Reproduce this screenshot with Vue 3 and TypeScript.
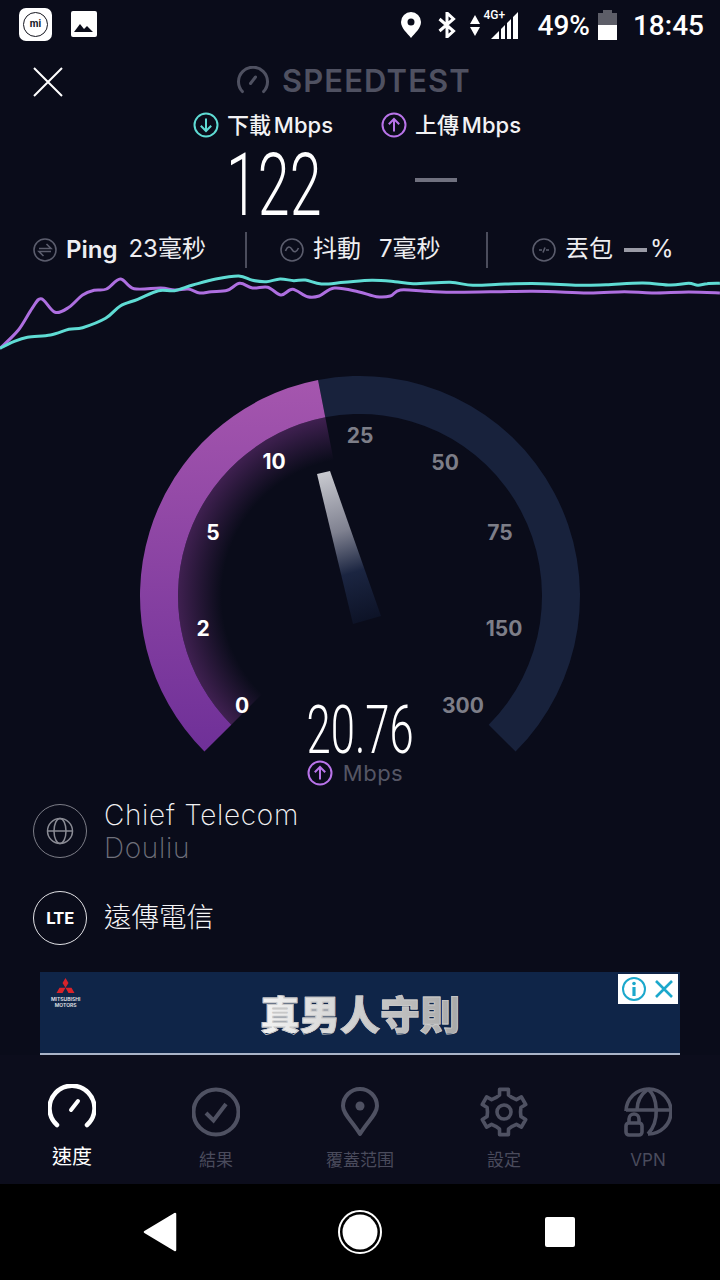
<script setup lang="ts">
type Pt = [number, number];

// chart points read from the reference (x scaled 2.178, y scaled 3, crop starts at y=100)
const teal: Pt[] = [[0,745],[30,725],[60,712],[110,705],[150,688],[180,683],[230,655],[262,618],[300,598],[345,572],[380,572],[420,555],[470,537],[520,528],[550,541],[580,545],[610,537],[640,542],[665,540],[700,552],[750,547],[810,541],[860,545],[900,551],[980,547],[1030,556],[1100,552],[1180,551],[1260,556],[1320,554],[1400,549],[1460,555],[1500,550],[1520,556],[1540,551],[1568,550]];
const violet: Pt[] = [[0,745],[40,690],[70,625],[90,596],[120,637],[150,622],[180,585],[205,571],[232,567],[262,537],[292,566],[350,564],[380,570],[410,567],[435,579],[460,575],[495,571],[522,550],[550,564],[583,562],[612,585],[637,568],[670,590],[695,588],[728,564],[780,575],[820,590],[850,588],[872,570],[930,574],[1000,577],[1160,574],[1280,579],[1360,575],[1420,579],[1500,576],[1568,579]];

// catmull-rom through the points so the lines stay soft
const toCurve = (pts: Pt[]) => {
  const p = pts.map(([x, y]): Pt => [x / 2.178, y / 3 + 100 - 270]);
  let d = `M${p[0][0].toFixed(1)} ${p[0][1].toFixed(1)}`;
  for (let i = 0; i < p.length - 1; i++) {
    const a = p[Math.max(i - 1, 0)];
    const b = p[i];
    const c = p[i + 1];
    const e = p[Math.min(i + 2, p.length - 1)];
    const c1x = b[0] + (c[0] - a[0]) / 6;
    const c1y = b[1] + (c[1] - a[1]) / 6;
    const c2x = c[0] - (e[0] - b[0]) / 6;
    const c2y = c[1] - (e[1] - b[1]) / 6;
    d += `C${c1x.toFixed(1)} ${c1y.toFixed(1)} ${c2x.toFixed(1)} ${c2y.toFixed(1)} ${c[0].toFixed(1)} ${c[1].toFixed(1)}`;
  }
  return d;
};

const cx = 360;
const cy = 596;

const polar = (r: number, deg: number): Pt => {
  const a = (deg * Math.PI) / 180;
  return [cx + r * Math.sin(a), cy - r * Math.cos(a)];
};

const sector = (r1: number, r2: number, from: number, to: number) => {
  const big = to - from > 180 ? 1 : 0;
  const [ax, ay] = polar(r2, from);
  const [bx, by] = polar(r2, to);
  const [cx2, cy2] = polar(r1, to);
  const [dx, dy] = polar(r1, from);
  return `M${ax} ${ay}A${r2} ${r2} 0 ${big} 1 ${bx} ${by}L${cx2} ${cy2}A${r1} ${r1} 0 ${big} 0 ${dx} ${dy}Z`;
};

const split = -11;
const trackPath = sector(182, 220, split, 135);
const fillPath = sector(182, 220, -135, split);
const glowPath = sector(130, 182, -135, split);

const ticks = [
  { t: "0", x: 242, y: 705, on: true },
  { t: "2", x: 203, y: 628, on: true },
  { t: "5", x: 213, y: 532, on: true },
  { t: "10", x: 274, y: 461, on: true },
  { t: "25", x: 360, y: 435, on: false },
  { t: "50", x: 445, y: 462, on: false },
  { t: "75", x: 500, y: 532, on: false },
  { t: "150", x: 504, y: 628, on: false },
  { t: "300", x: 463, y: 705, on: false },
];

// six tooth cog, same outline as the settings tab
const gear = (() => {
  const c = 24;
  const out: string[] = [];
  for (let i = 0; i < 6; i++) {
    const base = i * 60;
    const steps: [number, number][] = [
      [16.5, base - 30],
      [17.5, base - 15],
      [23, base - 11],
      [23, base + 11],
      [17.5, base + 15],
    ];
    for (const [r, d] of steps) {
      const a = (d * Math.PI) / 180;
      const x = c + r * Math.sin(a);
      const y = c - r * Math.cos(a);
      out.push(`${out.length ? "L" : "M"}${x.toFixed(1)} ${y.toFixed(1)}`);
    }
  }
  return out.join("") + "Z";
})();
</script>

<template>
  <div class="screen">
    <div class="status">
      <div class="status-left">
        <div class="mi-box">
          <span class="mi-ring"><span class="mi-text">mi</span></span>
        </div>
        <svg class="pic" width="26" height="26" viewBox="0 0 26 26">
          <rect width="26" height="26" rx="2" fill="#fff" />
          <path d="M3 21l6-8 4 5 3-3 6 6z" fill="#0a0c1a" />
        </svg>
      </div>
      <div class="status-right">
        <svg width="20" height="26" viewBox="0 0 20 26">
          <path fill-rule="evenodd" d="M10 0a10 10 0 0 1 10 10c0 6-6 11-10 16C6 21 0 16 0 10A10 10 0 0 1 10 0zm0 6.500a3.500 3.500 0 1 0 0 7 3.500 3.500 0 0 0 0-7z" fill="#fff" />
        </svg>
        <svg class="bt" width="18" height="26" viewBox="0 0 18 26">
          <path d="M1.500 7l14 12-6.500 6V1l6.500 6-14 12" fill="none" stroke="#fff" stroke-width="3" />
        </svg>
        <div class="net">
          <svg class="arrows" width="10" height="21" viewBox="0 0 10 21">
            <path d="M5 0l5 9H0zM5 21l5-9H0z" fill="#fff" />
          </svg>
          <span class="net-label">4G+</span>
          <svg class="bars" width="28" height="28" viewBox="0 0 28 28">
            <path d="M0 28L8 20V28ZM10 18l4-4V28H10ZM16 12l4-4V28H16ZM22 6l5-5V28H22Z" fill="#fff" />
          </svg>
        </div>
        <span class="pct">49%</span>
        <div class="battery"><div class="battery-cap"></div><div class="battery-top"></div><div class="battery-low"></div></div>
        <span class="clock">18:45</span>
      </div>
    </div>

    <div class="header">
      <svg class="close" width="32" height="32" viewBox="0 0 32 32">
        <path d="M2 2l28 28M30 2L2 30" stroke="#fff" stroke-width="2" fill="none" />
      </svg>
      <svg width="32" height="28" viewBox="0 0 32 28">
        <path d="M5.400 25.600a14.500 14.500 0 1 1 21.200 0" fill="none" stroke="#4f5161" stroke-width="3" stroke-linecap="round" />
        <path d="M13.500 17.500l5-6.500" fill="none" stroke="#4f5161" stroke-width="3" stroke-linecap="round" />
      </svg>
      <span class="brand">SPEEDTEST</span>
    </div>

    <div class="legend">
      <div class="legend-item">
        <svg width="26" height="26" viewBox="0 0 26 26">
          <circle cx="13" cy="13" r="11.500" fill="none" stroke="#5fdcd4" stroke-width="2" />
          <path d="M13 6.500v12.500M7.800 13.800l5.200 5.200 5.200-5.200" fill="none" stroke="#5fdcd4" stroke-width="2" />
        </svg>
        <span>下載 Mbps</span>
      </div>
      <div class="legend-item">
        <svg width="26" height="26" viewBox="0 0 26 26">
          <circle cx="13" cy="13" r="11.500" fill="none" stroke="#b974ea" stroke-width="2" />
          <path d="M13 19.500V7M7.800 12.200L13 7l5.200 5.200" fill="none" stroke="#b974ea" stroke-width="2" />
        </svg>
        <span>上傳 Mbps</span>
      </div>
    </div>

    <div class="values">
      <span class="big">122</span>
      <span class="dash"></span>
    </div>

    <div class="stats">
      <div class="stat stat-ping">
        <svg width="24" height="24" viewBox="0 0 24 24">
          <circle cx="12" cy="12" r="11" fill="none" stroke="#5b5d6d" stroke-width="1.600" />
          <path d="M6 10.500h12l-4.500-4.500M18 13.500H6l4.500 4.500" fill="none" stroke="#5b5d6d" stroke-width="1.600" />
        </svg>
        <b class="ping">Ping</b>
        <span>23毫秒</span>
      </div>
      <i class="rule"></i>
      <div class="stat stat-jitter">
        <svg width="24" height="24" viewBox="0 0 24 24">
          <circle cx="12" cy="12" r="11" fill="none" stroke="#5b5d6d" stroke-width="1.600" />
          <path d="M5.500 13c2-5 4.500-5 6.500-1.500s4.500 3 6.500-1.500" fill="none" stroke="#5b5d6d" stroke-width="1.600" />
        </svg>
        <span class="cjk">抖動</span>
        <span>7毫秒</span>
      </div>
      <i class="rule"></i>
      <div class="stat stat-loss">
        <svg width="24" height="24" viewBox="0 0 24 24">
          <circle cx="12" cy="12" r="11" fill="none" stroke="#5b5d6d" stroke-width="1.600" />
          <path d="M7 12h3M14 12h3M11 14.500l2-5" fill="none" stroke="#5b5d6d" stroke-width="1.600" />
        </svg>
        <span class="cjk">丟包</span>
        <i class="loss-dash"></i>
        <span>%</span>
      </div>
    </div>

    <svg class="chart" width="720" height="82" viewBox="0 0 720 82">
      <path :d="toCurve(violet)" fill="none" stroke="#ae6fe0" stroke-width="3" stroke-linejoin="round" />
      <path :d="toCurve(teal)" fill="none" stroke="#5fdcd4" stroke-width="3" stroke-linejoin="round" />
    </svg>

    <div class="gauge">
      <svg width="720" height="420" viewBox="0 370 720 420">
        <defs>
          <linearGradient id="arcFill" x1="0" y1="380" x2="0" y2="750" gradientUnits="userSpaceOnUse">
            <stop offset="0" stop-color="#a556ae" />
            <stop offset="1" stop-color="#6f3098" />
          </linearGradient>
          <radialGradient id="arcGlow" :cx="cx" :cy="cy" r="182" gradientUnits="userSpaceOnUse">
            <stop offset="0.76" stop-color="#0a0c1a" />
            <stop offset="1" stop-color="#3f2050" />
          </radialGradient>
          <linearGradient id="needle" x1="323" y1="472" x2="367" y2="620" gradientUnits="userSpaceOnUse">
            <stop offset="0" stop-color="#c9cad0" />
            <stop offset="0.4" stop-color="#7f8190" />
            <stop offset="0.68" stop-color="#1b2541" />
            <stop offset="1" stop-color="#0d1327" />
          </linearGradient>
        </defs>
        <path :d="glowPath" fill="url(#arcGlow)" />
        <path :d="trackPath" fill="#18223c" />
        <path :d="fillPath" fill="url(#arcFill)" />
        <polygon points="317,474 330,471 381,616 353,624" fill="url(#needle)" />
        <text v-for="tick in ticks" :key="tick.t" :x="tick.x" :y="tick.y + 7.500" class="tick" :class="{ on: tick.on }" text-anchor="middle">{{ tick.t }}</text>
      </svg>
      <div class="reading">
        <span class="reading-num">20.76</span>
        <div class="reading-unit">
          <svg width="26" height="26" viewBox="0 0 26 26">
            <circle cx="13" cy="13" r="11.500" fill="none" stroke="#b974ea" stroke-width="2" />
            <path d="M13 19.500V7M7.800 12.200L13 7l5.200 5.200" fill="none" stroke="#b974ea" stroke-width="2" />
          </svg>
          <span>Mbps</span>
        </div>
      </div>
    </div>

    <div class="info">
      <div class="info-row">
        <div class="badge">
          <svg width="28" height="28" viewBox="0 0 28 28">
            <circle cx="14" cy="14" r="12.500" fill="none" stroke="#8a8b94" stroke-width="1.500" />
            <ellipse cx="14" cy="14" rx="6" ry="12.500" fill="none" stroke="#8a8b94" stroke-width="1.500" />
            <path d="M1.500 14h25" stroke="#8a8b94" stroke-width="1.500" />
          </svg>
        </div>
        <div class="info-text">
          <div class="info-name">Chief Telecom</div>
          <div class="info-sub">Douliu</div>
        </div>
      </div>
      <div class="info-row second">
        <div class="badge badge-on"><span>LTE</span></div>
        <div class="carrier">遠傳電信</div>
      </div>
    </div>

    <div class="ad">
      <div class="ad-logo">
        <svg width="19" height="18" viewBox="0 0 24 24">
          <path d="M12 0l4 6.500-4 6.500-4-6.500zM12 13h8l4 7h-8zM12 13H4l-4 7h8z" fill="#d8232a" />
        </svg>
        <span>MITSUBISHI<br />MOTORS</span>
      </div>
      <div class="ad-title">真男人守則</div>
      <div class="ad-close">
        <svg width="26" height="26" viewBox="0 0 26 26">
          <circle cx="13" cy="13" r="11" fill="none" stroke="#1ba8cc" stroke-width="2" />
          <circle cx="13" cy="7.500" r="1.800" fill="#1ba8cc" />
          <path d="M13 11v9" stroke="#1ba8cc" stroke-width="3.200" />
        </svg>
        <svg width="22" height="22" viewBox="0 0 22 22">
          <path d="M3 3l16 16M19 3L3 19" stroke="#1ba8cc" stroke-width="2.600" />
        </svg>
      </div>
    </div>

    <div class="tabs">
      <div class="tab active">
        <svg width="48" height="50" viewBox="0 0 48 50">
          <path d="M9 41a22.500 22.500 0 1 1 30 0" fill="none" stroke="#fff" stroke-width="4.500" stroke-linecap="round" />
          <path d="M23 26l7-9" fill="none" stroke="#fff" stroke-width="4" stroke-linecap="round" />
        </svg>
        <span>速度</span>
      </div>
      <div class="tab">
        <svg width="48" height="50" viewBox="0 0 48 50">
          <circle cx="24" cy="25" r="22.500" fill="none" stroke="#4f5162" stroke-width="4" />
          <path d="M14 26l7.500 7.500L34 17" fill="none" stroke="#4f5162" stroke-width="4" />
        </svg>
        <span>結果</span>
      </div>
      <div class="tab">
        <svg width="48" height="50" viewBox="0 0 48 50">
          <path d="M24 47C16 34 7 27 7 19a17 17 0 0 1 34 0c0 8-9 15-17 28z" fill="none" stroke="#4f5162" stroke-width="4" stroke-linejoin="round" />
          <circle cx="24" cy="19" r="4.500" fill="#4f5162" />
        </svg>
        <span>覆蓋范围</span>
      </div>
      <div class="tab">
        <svg width="48" height="50" viewBox="0 -1 48 50">
          <path :d="gear" fill="none" stroke="#4f5162" stroke-width="3.600" stroke-linejoin="round" />
          <circle cx="24" cy="24" r="7" fill="none" stroke="#4f5162" stroke-width="3.600" />
        </svg>
        <span>設定</span>
      </div>
      <div class="tab">
        <svg width="48" height="50" viewBox="0 0 48 50">
          <path d="M2 24A22.500 22.500 0 1 1 24 47" fill="none" stroke="#4f5162" stroke-width="3.600" />
          <path d="M2 23h44M24 2c10 8 12 32 0 45M24 2c-8 6-11 13-11 21" fill="none" stroke="#4f5162" stroke-width="3.600" />
          <rect x="2" y="36" width="16" height="12" rx="3" fill="#0c0d1c" stroke="#4f5162" stroke-width="3.600" />
          <path d="M5 36v-4a5 5 0 0 1 10 0v4" fill="none" stroke="#4f5162" stroke-width="3.600" />
        </svg>
        <span class="latin">VPN</span>
      </div>
    </div>

    <div class="navbar">
      <svg width="34" height="40" viewBox="0 0 34 40">
        <path d="M32 2v36L2 20z" fill="#fff" stroke="#fff" stroke-width="2.500" stroke-linejoin="round" />
      </svg>
      <svg width="44" height="44" viewBox="0 0 44 44">
        <circle cx="22" cy="22" r="21" fill="none" stroke="#fff" stroke-width="2" />
        <circle cx="22" cy="22" r="17.500" fill="#fff" />
      </svg>
      <div class="nav-square"></div>
    </div>
  </div>
</template>

<style>
html,
body {
  margin: 0;
  background: #0a0c1a;
}
</style>

<style scoped>
.screen {
  width: 720px;
  height: 1280px;
  overflow: hidden;
  display: flex;
  flex-direction: column;
  background: #0a0c1a;
  color: #fff;
  font-family: Inter, "Noto Sans CJK TC", sans-serif;
}

.status {
  height: 50px;
  flex: none;
  display: flex;
  justify-content: space-between;
  align-items: center;
  padding: 0 16px 0 19px;
  font-family: Roboto, sans-serif;
}
.status-left {
  display: flex;
  align-items: center;
  gap: 19px;
  margin-top: -2px;
}
.mi-box {
  width: 33px;
  height: 33px;
  border-radius: 7px;
  background: #fff;
  display: flex;
  align-items: center;
  justify-content: center;
}
.mi-ring {
  width: 23px;
  height: 23px;
  border-radius: 50%;
  border: 1.500px solid #15161f;
  display: flex;
  align-items: center;
  justify-content: center;
}
.mi-text {
  color: #15161f;
  font-size: 10px;
  font-weight: 700;
  line-height: 1;
}
.status-right {
  display: flex;
  align-items: center;
}
.bt {
  margin-left: 17px;
}
.net {
  width: 49px;
  height: 30px;
  margin-left: 14px;
  display: flex;
  position: relative;
}
.arrows {
  margin-top: 5px;
}
.net-label {
  position: absolute;
  left: 14px;
  top: -1px;
  font-size: 12px;
  font-weight: 500;
  line-height: 12px;
}
.bars {
  position: absolute;
  left: 21px;
  top: 1px;
}
.pct {
  margin-left: 19px;
  font-size: 28px;
  font-weight: 500;
}
.battery {
  width: 19px;
  margin-left: 8px;
  display: flex;
  flex-direction: column;
  align-items: center;
}
.battery-cap {
  width: 9px;
  height: 3px;
  background: #5d5e68;
}
.battery-top {
  width: 19px;
  height: 12px;
  background: #5d5e68;
}
.battery-low {
  width: 19px;
  height: 15px;
  background: #fff;
}
.clock {
  margin-left: 16px;
  font-size: 28px;
  font-weight: 500;
}

.header {
  height: 60px;
  flex: none;
  display: flex;
  align-items: center;
  padding-left: 237px;
  position: relative;
}
.close {
  position: absolute;
  left: 32px;
  top: 16px;
}
.brand {
  margin-left: 13px;
  font-size: 31px;
  font-weight: 600;
  letter-spacing: 1.1px;
  color: #4f5161;
  line-height: 1;
}

.legend {
  height: 30px;
  flex: none;
  display: flex;
  padding-left: 193px;
  gap: 48px;
}
.legend-item {
  display: flex;
  align-items: center;
  gap: 8px;
  font-size: 22px;
  font-weight: 500;
  word-spacing: -3px;
  line-height: 1;
  color: #f2f2f4;
}
.legend-item span {
  margin-bottom: 1px;
}

.values {
  height: 90px;
  flex: none;
  display: flex;
  align-items: center;
  padding-left: 226px;
}
.big {
  display: inline-block;
  width: 93px;
  font-family: Roboto, sans-serif;
  font-weight: 300;
  font-size: 87px;
  line-height: 90px;
  transform: scaleX(0.66);
  transform-origin: left center;
}
.dash {
  width: 42px;
  height: 4px;
  margin: 0 0 10px 96px;
  background: #70717f;
}

.stats {
  height: 40px;
  flex: none;
  display: flex;
  align-items: center;
  font-size: 24px;
  color: #eeeef1;
}
.stat {
  display: flex;
  align-items: center;
  line-height: 1;
}
.stat span {
  margin-bottom: 2px;
}
.stat svg {
  margin-right: 9px;
}
.stat-ping {
  width: 245px;
  padding-left: 33px;
  box-sizing: border-box;
}
.ping {
  font-weight: 600;
  margin-right: 11px;
}
.stat-jitter {
  width: 239px;
  padding-left: 33px;
  box-sizing: border-box;
}
.stat-jitter .cjk {
  margin-right: 18px;
}
.stat-loss {
  padding-left: 44px;
}
.stat-loss .cjk {
  margin-right: 11px;
}
.rule {
  width: 2px;
  height: 36px;
  flex: none;
  background: #4b4d5c;
}
.loss-dash {
  width: 23px;
  height: 4px;
  margin-right: 3px;
  background: #9a9ba6;
}

.chart {
  flex: none;
  display: block;
}

.gauge {
  height: 420px;
  margin-top: 18px;
  flex: none;
  position: relative;
}
.gauge svg {
  display: block;
}
.tick {
  font-family: Inter, sans-serif;
  font-size: 21px;
  font-weight: 700;
  fill: #7d7e88;
}
.tick.on {
  fill: #fff;
}
.reading {
  position: absolute;
  left: 0;
  right: 0;
  top: 332px;
  display: flex;
  flex-direction: column;
  align-items: center;
}
.reading-num {
  font-family: Roboto, sans-serif;
  font-weight: 300;
  font-size: 66px;
  line-height: 58px;
  transform: scaleX(0.66);
}
.reading-unit {
  display: flex;
  align-items: center;
  gap: 10px;
  margin-right: 10px;
  font-size: 22px;
  line-height: 26px;
  letter-spacing: 0.5px;
  color: #555665;
}

.info {
  height: 182px;
  flex: none;
  padding-left: 33px;
  display: flex;
  flex-direction: column;
}
.info-row {
  display: flex;
  align-items: center;
  gap: 17px;
  height: 54px;
  margin-top: 14px;
}
.info-row.second {
  margin-top: 33px;
}
.badge {
  width: 54px;
  height: 54px;
  box-sizing: border-box;
  flex: none;
  border: 1.500px solid #7c7d87;
  border-radius: 50%;
  display: flex;
  align-items: center;
  justify-content: center;
}
.badge-on {
  border-color: #e2e2e6;
  font-family: Roboto, sans-serif;
  font-size: 17px;
  font-weight: 700;
}
.info-text {
  padding-top: 2px;
}
.info-name {
  font-size: 28px;
  font-weight: 200;
  letter-spacing: 0.7px;
  line-height: 33px;
  color: #f2f2f4;
}
.info-sub {
  font-size: 28px;
  font-weight: 200;
  letter-spacing: 0.7px;
  line-height: 33px;
  color: #6f707b;
}
.carrier {
  font-size: 27.500px;
  font-weight: 300;
  line-height: 1;
  color: #f4f4f6;
}

.ad {
  width: 640px;
  height: 83px;
  box-sizing: border-box;
  margin: 0 40px;
  flex: none;
  position: relative;
  background: #0f2548;
  border-bottom: 2px solid #aab4c8;
  display: flex;
  align-items: center;
  justify-content: center;
}
.ad-logo {
  position: absolute;
  left: 11px;
  top: 6px;
  display: flex;
  flex-direction: column;
  align-items: center;
  gap: 1px;
}
.ad-logo span {
  font-size: 5px;
  line-height: 5.500px;
  text-align: center;
  font-weight: 600;
  color: #e6e6ea;
}
.ad-title {
  font-family: "Noto Sans CJK TC", sans-serif;
  font-size: 40px;
  font-weight: 900;
  line-height: 1;
  background: linear-gradient(90deg, #f4f4f4, #a8a8a8);
  -webkit-background-clip: text;
  background-clip: text;
  color: transparent;
  -webkit-text-stroke: 0.8px #c8c8c8;
}
.ad-close {
  position: absolute;
  right: 2px;
  top: 2px;
  width: 60px;
  height: 30px;
  background: #fff;
  display: flex;
  align-items: center;
  justify-content: space-around;
}

.tabs {
  height: 129px;
  flex: none;
  display: grid;
  grid-template-columns: repeat(5, 144px);
  background: #0c0d1c;
}
.tab {
  display: flex;
  flex-direction: column;
  align-items: center;
  padding-top: 32px;
  font-size: 17px;
  color: #4a4b5c;
}
.tab span {
  margin-top: 11px;
  line-height: 24px;
}
.tab.active {
  padding-top: 29px;
  font-size: 20px;
  color: #fff;
}
.tab.active span {
  margin-top: 9px;
  line-height: 28px;
}

.navbar {
  height: 96px;
  flex: none;
  background: #000;
  display: grid;
  grid-template-columns: 200px 200px 200px;
  justify-content: center;
  justify-items: center;
  align-items: center;
}
.nav-square {
  width: 30px;
  height: 30px;
  border-radius: 2px;
  background: #fff;
}
</style>
